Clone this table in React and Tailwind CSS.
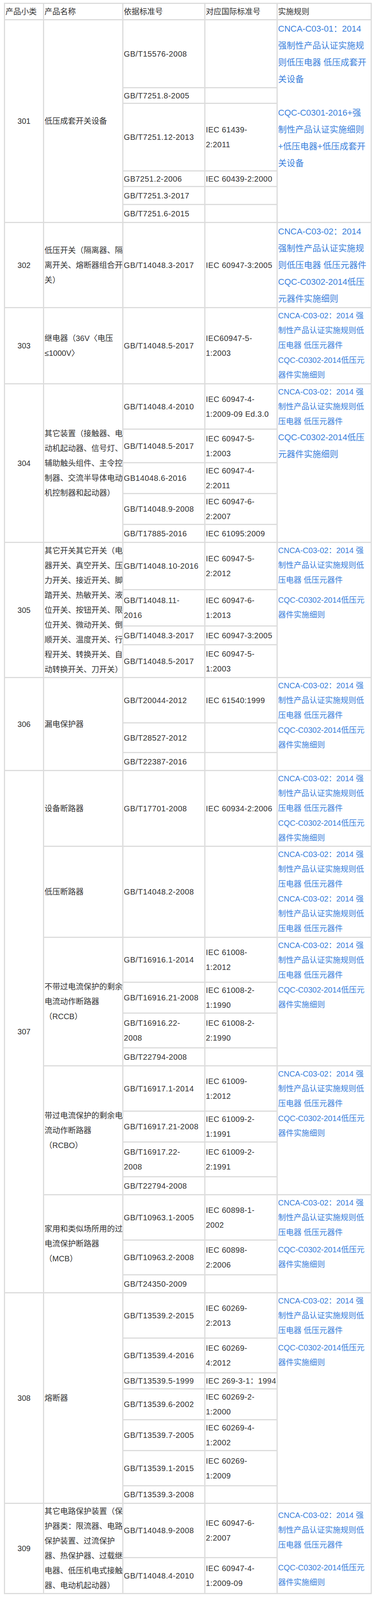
import React from 'react'

// ─── Data ─────────────────────────────────────────────────────────────────────

const RULE_STD = [
  { lines: ['CNCA-C03-02：2014 强', '制性产品认证实施规则低', '压电器 低压元器件'] },
  { lines: ['CQC-C0302-2014低压元', '器件实施细则'] },
]

const TABLE = [
  {
    no: '301',
    groups: [{
      name: ['低压成套开关设备'],
      rule: [
        { big: true, lines: ['CNCA-C03-01：2014', '强制性产品认证实施规', '则低压电器 低压成套开', '关设备'] },
        { big: true, gap: 'mt-[43px]', lines: ['CQC-C0301-2016+强', '制性产品认证实施细则', '+低压电器+低压成套开', '关设备'] },
      ],
      subs: [
        { gb: ['GB/T15576-2008'], iec: [], h: 'h-[174px]' },
        { gb: ['GB/T7251.8-2005'], iec: [], h: 'h-[40px]' },
        { gb: ['GB/T7251.12-2013'], iec: ['IEC 61439-', '2:2011'], h: 'h-[173px]' },
        { gb: ['GB7251.2-2006'], iec: ['IEC 60439-2:2000'], h: 'h-[40px]' },
        { gb: ['GB/T7251.3-2017'], iec: [], h: 'h-[46px]' },
        { gb: ['GB/T7251.6-2015'], iec: [], h: 'h-[46px]' },
      ],
    }],
  },
  {
    no: '302',
    groups: [{
      name: ['低压开关（隔离器、隔', '离开关、熔断器组合开', '关）'],
      rule: [
        { big: true, lines: ['CNCA-C03-02：2014', '强制性产品认证实施规', '则低压电器 低压元器件'] },
        { big: true, lines: ['CQC-C0302-2014低压', '元器件实施细则'] },
      ],
      subs: [
        { gb: ['GB/T14048.3-2017'], iec: ['IEC 60947-3:2005'], h: 'h-[218px]' },
      ],
    }],
  },
  {
    no: '303',
    groups: [{
      name: ['继电器（36V〈电压', '≤1000V〉'],
      rule: RULE_STD,
      subs: [
        { gb: ['GB/T14048.5-2017'], iec: ['IEC60947-5-', '1:2003'], h: 'h-[195px]' },
      ],
    }],
  },
  {
    no: '304',
    groups: [{
      name: ['其它装置（接触器、电', '动机起动器、信号灯、', '辅助触头组件、主令控', '制器、交流半导体电动', '机控制器和起动器）'],
      rule: [
        RULE_STD[0],
        { big: true, lines: ['CQC-C0302-2014低压', '元器件实施细则'] },
      ],
      subs: [
        { gb: ['GB/T14048.4-2010'], iec: ['IEC 60947-4-', '1:2009-09 Ed.3.0'], h: 'h-[116px]' },
        { gb: ['GB/T14048.5-2017'], iec: ['IEC 60947-5-', '1:2003'], h: 'h-[86px]' },
        { gb: ['GB14048.6-2016'], iec: ['IEC 60947-4-', '2:2011'], h: 'h-[79px]' },
        { gb: ['GB/T14048.9-2008'], iec: ['IEC 60947-6-', '2:2007'], h: 'h-[79px]' },
        { gb: ['GB/T17885-2016'], iec: ['IEC 61095:2009'], h: 'h-[46px]' },
      ],
    }],
  },
  {
    no: '305',
    groups: [{
      name: [
        '其它开关其它开关（电', '器开关、真空开关、压', '力开关、接近开关、脚', '踏开关、热敏开关、液',
        '位开关、按钮开关、限', '位开关、微动开关、倒', '顺开关、温度开关、行', '程开关、转换开关、自',
        '动转换开关、刀开关）',
      ],
      rule: [RULE_STD[0], { ...RULE_STD[1], gap: 'mt-[13px]' }],
      subs: [
        { gb: ['GB/T14048.10-2016'], iec: ['IEC 60947-5-', '2:2012'], h: 'h-[121px]' },
        { gb: ['GB/T14048.11-', '2016'], iec: ['IEC 60947-6-', '1:2013'], h: 'h-[93px]' },
        { gb: ['GB/T14048.3-2017'], iec: ['IEC 60947-3:2005'], h: 'h-[48px]' },
        { gb: ['GB/T14048.5-2017'], iec: ['IEC 60947-5-', '1:2003'], h: 'h-[84px]' },
      ],
    }],
  },
  {
    no: '306',
    groups: [{
      name: ['漏电保护器'],
      rule: RULE_STD,
      subs: [
        { gb: ['GB/T20044-2012'], iec: ['IEC 61540:1999'], h: 'h-[116px]' },
        { gb: ['GB/T28527-2012'], iec: [], h: 'h-[76px]' },
        { gb: ['GB/T22387-2016'], iec: [], h: 'h-[46px]' },
      ],
    }],
  },
  {
    no: '307',
    groups: [
      {
        name: ['设备断路器'],
        rule: RULE_STD,
        subs: [{ gb: ['GB/T17701-2008'], iec: ['IEC 60934-2:2006'], h: 'h-[194px]' }],
      },
      {
        name: ['低压断路器'],
        rule: [RULE_STD[0], RULE_STD[0]],
        subs: [{ gb: ['GB/T14048.2-2008'], iec: [], h: 'h-[233px]' }],
      },
      {
        name: ['不带过电流保护的剩余', '电流动作断路器', '（RCCB）'],
        rule: RULE_STD,
        subs: [
          { gb: ['GB/T16916.1-2014'], iec: ['IEC 61008-', '1:2012'], h: 'h-[115px]' },
          { gb: ['GB/T16916.21-2008'], iec: ['IEC 61008-2-', '1:1990'], h: 'h-[79px]' },
          { gb: ['GB/T16916.22-', '2008'], iec: ['IEC 61008-2-', '2:1990'], h: 'h-[89px]' },
          { gb: ['GB/T22794-2008'], iec: [], h: 'h-[46px]' },
        ],
      },
      {
        name: ['带过电流保护的剩余电', '流动作断路器', '（RCBO）'],
        rule: RULE_STD,
        subs: [
          { gb: ['GB/T16917.1-2014'], iec: ['IEC 61009-', '1:2012'], h: 'h-[116px]' },
          { gb: ['GB/T16917.21-2008'], iec: ['IEC 61009-2-', '1:1991'], h: 'h-[79px]' },
          { gb: ['GB/T16917.22-', '2008'], iec: ['IEC 61009-2-', '2:1991'], h: 'h-[89px]' },
          { gb: ['GB/T22794-2008'], iec: [], h: 'h-[46px]' },
        ],
      },
      {
        name: ['家用和类似场所用的过', '电流保护断路器', '（MCB）'],
        rule: [RULE_STD[0], { ...RULE_STD[1], gap: 'mt-[6px]' }],
        subs: [
          { gb: ['GB/T10963.1-2005'], iec: ['IEC 60898-1-', '2002'], h: 'h-[116px]' },
          { gb: ['GB/T10963.2-2008'], iec: ['IEC 60898-', '2:2006'], h: 'h-[89px]' },
          { gb: ['GB/T24350-2009'], iec: [], h: 'h-[46px]' },
        ],
      },
    ],
  },
  {
    no: '308',
    groups: [{
      name: ['熔断器'],
      rule: [RULE_STD[0], { ...RULE_STD[1], gap: 'mt-[6px]' }],
      subs: [
        { gb: ['GB/T13539.2-2015'], iec: ['IEC 60269-', '2:2013'], h: 'h-[116px]' },
        { gb: ['GB/T13539.4-2016'], iec: ['IEC 60269-', '4:2012'], h: 'h-[89px]' },
        { gb: ['GB/T13539.5-1999'], iec: ['IEC 269-3-1：1994'], h: 'h-[41px]' },
        { gb: ['GB/T13539.6-2002'], iec: ['IEC 60269-2-', '1:2000'], h: 'h-[79px]' },
        { gb: ['GB/T13539.7-2005'], iec: ['IEC 60269-4-', '1:2002'], h: 'h-[79px]' },
        { gb: ['GB/T13539.1-2015'], iec: ['IEC 60269-', '1:2009'], h: 'h-[90px]' },
        { gb: ['GB/T13539.3-2008'], iec: [], h: 'h-[45px]' },
      ],
    }],
  },
  {
    no: '309',
    groups: [{
      name: ['其它电路保护装置（保', '护器类：限流器、电路', '保护装置、过流保护', '器、热保护器、过载继', '电器、低压机电式接触', '器、电动机起动器）'],
      rulePad: 'pt-[10px]',
      rule: [RULE_STD[0], { ...RULE_STD[1], gap: 'mt-[20px]' }],
      subs: [
        { gb: ['GB/T14048.9-2008'], iec: ['IEC 60947-6-', '2:2007'], h: 'h-[139px]' },
        { gb: ['GB/T14048.4-2010'], iec: ['IEC 60947-4-', '1:2009-09'], h: 'h-[92px]' },
      ],
    }],
  },
]

// ─── Pieces ───────────────────────────────────────────────────────────────────

const LINE = 'border-r-[3px] border-b-[3px] border-[#dcdcdc]'

// fixed box per line so mixed Latin/CJK fonts can't stretch the rows
function Lines({ lines, big }) {
  return lines.map((l, i) => (
    <div key={i} className={`whitespace-nowrap ${big ? 'h-[43px] leading-[43px]' : 'h-[38px] leading-[38px]'}`}>
      {l}
    </div>
  ))
}

function Rule({ group }) {
  return (
    <div className={`w-[241px] shrink-0 pl-px text-[#3a80dc] ${LINE} ${group.rulePad ?? ''}`}>
      {group.rule.map((b, i) => (
        <div key={i} className={`${b.big ? 'text-[22px]' : ''} ${b.gap ?? ''}`}>
          <Lines lines={b.lines} big={b.big} />
        </div>
      ))}
    </div>
  )
}

function Group({ group }) {
  return (
    <div className="flex">
      <div className={`w-[203px] shrink-0 flex flex-col justify-center pl-px ${LINE}`}>
        <Lines lines={group.name} />
      </div>
      <div className="flex flex-col">
        {group.subs.map((s, i) => (
          <div key={i} className={`flex ${s.h}`}>
            <div className={`w-[210px] shrink-0 flex flex-col justify-center pl-px tracking-[0.6px] ${LINE}`}>
              <Lines lines={s.gb} />
            </div>
            <div className={`w-[185px] shrink-0 flex flex-col justify-center pl-px tracking-[0.5px] ${LINE}`}>
              <Lines lines={s.iec} />
            </div>
          </div>
        ))}
      </div>
      <Rule group={group} />
    </div>
  )
}

function Category({ cat }) {
  return (
    <div className="flex">
      <div className={`w-[100px] shrink-0 flex items-center justify-center ${LINE}`}>
        <Lines lines={[cat.no]} />
      </div>
      <div className="flex flex-col">
        {cat.groups.map((g, i) => <Group key={i} group={g} />)}
      </div>
    </div>
  )
}

const HEAD = [
  { t: '产品小类', w: 'w-[100px]' },
  { t: '产品名称', w: 'w-[203px]' },
  { t: '依据标准号', w: 'w-[210px]' },
  { t: '对应国际标准号', w: 'w-[185px]' },
  { t: '实施规则', w: 'w-[241px]' },
]

// ─── Page ─────────────────────────────────────────────────────────────────────

export default function App() {
  return (
    <div className="bg-white pl-[10px] pt-[7px] font-[family-name:Liberation_Sans,Noto_Sans_CJK_SC,sans-serif] text-[20px] leading-[38px] text-[#333333]">
      <div className="w-[942px] border-l-[3px] border-t-[3px] border-[#dcdcdc]">
        <div className="flex h-[42px]">
          {HEAD.map(h => (
            <div key={h.t} className={`${h.w} shrink-0 flex flex-col justify-center pl-px ${LINE}`}>
              <Lines lines={[h.t]} />
            </div>
          ))}
        </div>
        {TABLE.map(cat => <Category key={cat.no} cat={cat} />)}
      </div>
    </div>
  )
}
